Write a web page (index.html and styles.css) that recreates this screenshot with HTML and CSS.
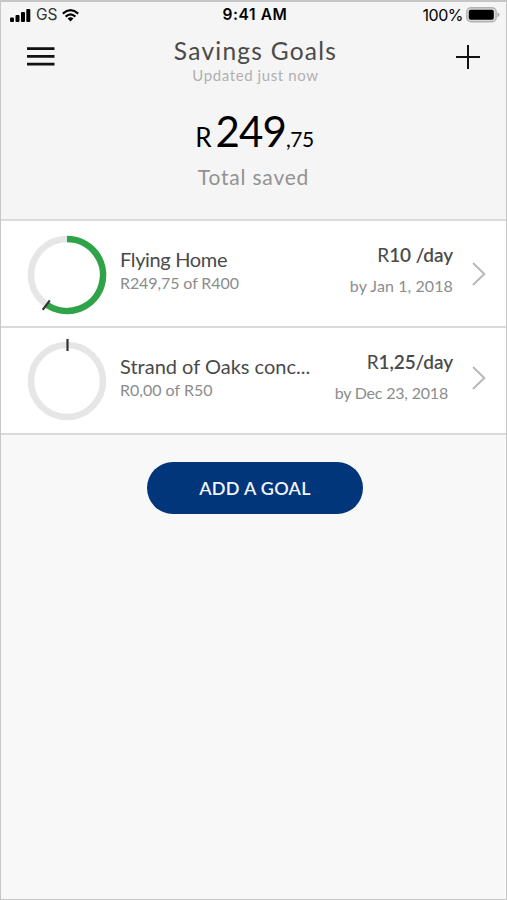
FILE: index.html
```html
<!DOCTYPE html>
<html lang="en">
<head>
<meta charset="utf-8">
<title>Savings Goals</title>
<link rel="stylesheet" href="styles.css">
</head>
<body>
<div class="phone">
  <header class="hero">
    <div class="status">
      <div class="carrier">
        <svg class="signal" width="21" height="13" viewBox="0 0 21 13"><rect x="0" y="8.5" width="4" height="4.5" rx="1"/><rect x="5.5" y="6" width="4" height="7" rx="1"/><rect x="11" y="3" width="4" height="10" rx="1"/><rect x="16.3" y="0" width="4" height="13" rx="1"/></svg>
        <span class="network">GS</span>
        <svg class="wifi" width="17" height="13" viewBox="0 0 17 13"><g fill="none" stroke="#000" stroke-width="2.1"><path d="M.8 4.6Q8.5-2.2 16.2 4.6"/><path d="M3.6 7.6Q8.5 3.2 13.4 7.6"/></g><path d="M5.6 9.6Q8.5 7.1 11.4 9.6L8.5 12.6Z"/></svg>
      </div>
      <div class="time">9:41 AM</div>
      <div class="power">
        <span class="percent">100%</span>
        <svg width="34" height="16" viewBox="0 0 34 16"><rect x=".8" y=".8" width="29.4" height="14" rx="4.2" fill="#d8d8d8" stroke="#b4b4b4" stroke-width="1.4"/><rect x="2.8" y="2.8" width="25" height="10" rx="2"/><path d="M31.5 5.5Q33.5 6 33.5 7.8T31.5 10.2Z" fill="#aaa"/></svg>
      </div>
    </div>
    <nav class="nav">
      <svg class="menu" width="28" height="20" viewBox="0 0 28 20"><path d="M0 1.7H27.5M0 9.4H27.5M0 17.1H27.5" stroke="#111" stroke-width="2.7"/></svg>
      <div class="heading">
        <h1 class="title">Savings Goals</h1>
        <p class="updated">Updated just now</p>
      </div>
      <svg class="plus" width="24" height="24" viewBox="0 0 24 24"><path d="M0 12H24M12 0V24" stroke="#111" stroke-width="2"/></svg>
    </nav>
    <div class="amount"><span class="currency">R</span><span class="whole">249</span><span class="cents">,75</span></div>
    <p class="caption">Total saved</p>
  </header>
  <main>
    <section class="goal">
      <svg class="ring" width="80" height="84" viewBox="0 0 80 84"><circle class="track" cx="40" cy="42" r="36"/><path class="progress" d="M40 6A36 36 0 1 1 20 71.9"/><path class="marker" d="M15.7 76.8L22.8 67.3"/></svg>
      <div class="info"><h2 class="name n1">Flying Home</h2><p class="saved s1">R249,75 of R400</p></div>
      <div class="plan"><p class="rate">R<b>10 /day</b></p><p class="due d1">by Jan 1, 2018</p></div>
      <svg class="chevron" width="14" height="24" viewBox="0 0 14 24"><path d="M1 1L12.3 12L1 23"/></svg>
    </section>
    <section class="goal second">
      <svg class="ring" width="80" height="84" viewBox="0 0 80 84"><circle class="track" cx="40" cy="42" r="36"/><path class="marker" d="M40.5 0V12"/></svg>
      <div class="info"><h2 class="name">Strand of Oaks conc...</h2><p class="saved">R0,00 of R50</p></div>
      <div class="plan"><p class="rate">R<b>1,25/day</b></p><p class="due d2">by Dec 23, 2018</p></div>
      <svg class="chevron" width="14" height="24" viewBox="0 0 14 24"><path d="M1 1L12.3 12L1 23"/></svg>
    </section>
    <button class="add">ADD A GOAL</button>
  </main>
</div>
</body>
</html>
```

FILE: styles.css
```css
* { box-sizing: border-box; }
body { margin: 0; font-family: Lato, sans-serif; color: #4a4a4a; }
h1, h2, p { margin: 0; font-weight: 400; white-space: nowrap; }
svg { display: block; flex: none; }
.phone { width: 507px; height: 900px; border: 1px solid #c6c6c6; border-top-width: 2px; background: #f8f8f8; overflow: hidden; }
.hero { height: 219px; background: #f5f5f5; border-bottom: 2px solid #dadada; }
.status { display: grid; grid-template-columns: 1fr auto 1fr; height: 26px; padding: 0 6px 0 9px; align-items: center; font: 16px/26px Inter, sans-serif; color: #000; }
.carrier { display: flex; align-items: center; }
.network { margin: 0 5px; font-size: 15.5px; letter-spacing: -0.1px; color: #333; }
.time { font-weight: 600; font-size: 15.5px; letter-spacing: 0.6px; }
.power { display: flex; justify-content: flex-end; align-items: center; gap: 3px; }
.percent { letter-spacing: -0.5px; }
.nav { display: flex; justify-content: space-between; height: 60px; padding: 0 26px; }
.menu { margin-top: 19px; }
.plus { margin-top: 17px; }
.heading { text-align: center; padding-top: 8px; }
.title { font-size: 24.5px; line-height: 29px; letter-spacing: 1.25px; }
.updated { font-size: 15px; line-height: 20px; letter-spacing: 0.6px; color: #b0b0b0; }
.amount { display: flex; align-items: baseline; justify-content: center; height: 65px; line-height: 86px; color: #000; padding-left: 2px; }
.currency { font-size: 26px; margin-right: 4px; }
.whole { font-size: 42px; letter-spacing: -0.9px; }
.cents { font-size: 21px; letter-spacing: -0.4px; }
.caption { text-align: center; font-size: 21px; line-height: 48px; letter-spacing: 0.8px; color: #929292; }
.goal { display: flex; height: 107px; padding: 0 20px 0 26px; background: #fff; border-bottom: 2px solid #dadada; }
.ring { margin-top: 12px; }
.second .ring { margin-top: 11px; }
.track { fill: none; stroke: #e6e6e6; stroke-width: 6.5; }
.progress { fill: none; stroke: #2fa347; stroke-width: 6.5; }
.marker { fill: none; stroke: #333; stroke-width: 2.2; }
.info { margin-left: 13px; padding-top: 24px; }
.name { font-size: 20px; line-height: 28px; }
.n1 { letter-spacing: -0.35px; }
.saved { font-size: 16px; line-height: 19px; color: #8c8c8c; }
.s1 { letter-spacing: -0.1px; }
.plan { margin-left: auto; padding: 20px 2px 0 0; text-align: right; }
.rate { font-size: 19px; line-height: 28px; letter-spacing: -0.1px; }
.rate b { font-weight: 600; }
.due { font-size: 16px; line-height: 34px; color: #8c8c8c; }
.d1 { letter-spacing: 0.1px; }
.chevron { margin: 41px 0 0 17px; }
.second .chevron { margin-top: 38px; }
.chevron path { fill: none; stroke: #b8b8b8; stroke-width: 2; }
.d2 { margin-right: 5px; letter-spacing: -0.2px; }
.add { display: block; width: 216px; height: 52px; margin: 27px 0 0 146px; padding: 0; border: 0; border-radius: 26px; background: #02367b; color: #f1f5fb; font: 600 18px/52px Lato, sans-serif; letter-spacing: 0.3px; }
```
